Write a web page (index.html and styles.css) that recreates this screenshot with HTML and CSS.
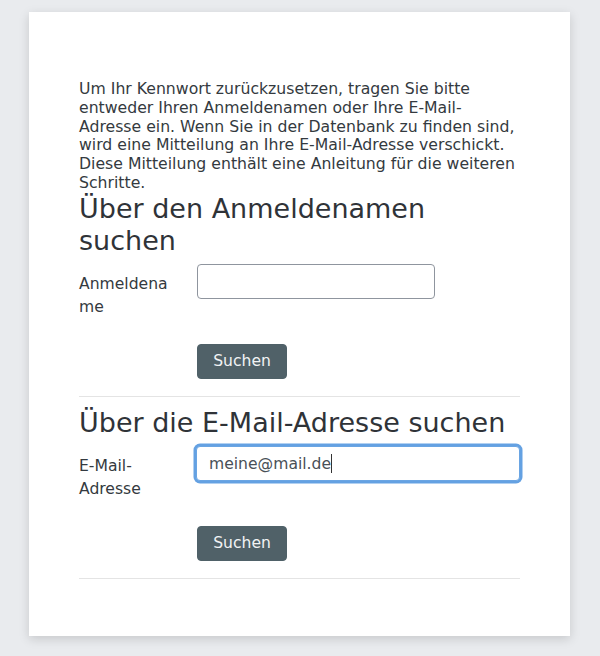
FILE: index.html
```html
<!DOCTYPE html>
<html lang="de">
<head>
<meta charset="utf-8">
<title>Kennwort vergessen</title>
<link rel="stylesheet" href="styles.css">
</head>
<body>
<div class="card">
  <p class="intro">Um Ihr Kennwort zurückzusetzen, tragen Sie bitte entweder Ihren Anmeldenamen oder Ihre E-Mail-Adresse ein. Wenn Sie in der Datenbank zu finden sind, wird eine Mitteilung an Ihre E-Mail-Adresse verschickt. Diese Mitteilung enthält eine Anleitung für die weiteren Schritte.</p>

  <form class="section">
    <h3 class="heading">Über den Anmeldenamen suchen</h3>
    <div class="row">
      <label class="label" for="username">Anmeldename</label>
      <input class="field field-short" id="username" type="text">
    </div>
    <div class="actions">
      <button class="btn" type="button">Suchen</button>
    </div>
    <hr class="sep">
  </form>

  <form class="section">
    <h3 class="heading">Über die E-Mail-Adresse suchen</h3>
    <div class="row">
      <label class="label" for="email">E-Mail-Adresse</label>
      <div class="field-wrap">
        <input class="field field-long focused" id="email" type="text" value="meine@mail.de">
        <span class="caret"></span>
      </div>
    </div>
    <div class="actions">
      <button class="btn" type="button">Suchen</button>
    </div>
    <hr class="sep">
  </form>
</div>
</body>
</html>
```

FILE: styles.css
```css
html, body {
  margin: 0;
  padding: 0;
}

body {
  background: #e9ebee;
  font-family: "DejaVu Sans", "Noto Sans", sans-serif;
  font-size: 15.6px;
  color: #343a40;
  padding: 12px 30px 0 29px;
  height: 656px;
  box-sizing: border-box;
}

.card {
  background: #ffffff;
  width: 541px;
  box-sizing: border-box;
  padding: 68px 50px 47px 50px;
  box-shadow: 0 3px 10px rgba(0, 0, 0, 0.15);
}

.intro {
  margin: 0 -1px 0 0;
  font-size: 15.7px;
  line-height: 18.75px;
}

.section {
  margin: 0;
}

.heading {
  margin: 0 0 7px 0;
  font-size: 27px;
  font-weight: normal;
  line-height: 32.4px;
  color: #2f3338;
}

.row {
  display: flex;
  align-items: flex-start;
  margin-bottom: 20px;
}

.label {
  width: 92px;
  margin-right: 26px;
  padding: 8.5px 0 4px 0;
  line-height: 23.5px;
  overflow-wrap: anywhere;
  color: #343a40;
}

.field {
  height: 35px;
  box-sizing: border-box;
  border: 1px solid #8f959e;
  border-radius: 4px;
  padding: 0 12px;
  font-family: "DejaVu Sans", sans-serif;
  font-size: 15.6px;
  color: #495057;
  background: #fff;
  outline: none;
}

.field-short {
  width: 238px;
}

.field-wrap {
  position: relative;
}

.field-long {
  width: 324px;
}

.focused {
  border-color: #6aa5e3;
  box-shadow: 0 0 0 2.5px rgba(40, 125, 215, 0.72);
}

.caret {
  position: absolute;
  left: 135px;
  top: 8px;
  width: 1px;
  height: 19px;
  background: #333;
}

.actions {
  padding-left: 118px;
}

.btn {
  display: block;
  box-sizing: border-box;
  height: 35px;
  width: 90px;
  padding: 0;
  border: 1px solid #4f6168;
  border-radius: 4px;
  background: #506168;
  color: #f1f3f4;
  font-family: "DejaVu Sans", sans-serif;
  font-size: 15.6px;
  line-height: 22.5px;
}

.sep {
  margin: 17.5px 0 9.5px 0;
  border: 0;
  border-top: 1px solid #e4e4e4;
  height: 0;
}
```
